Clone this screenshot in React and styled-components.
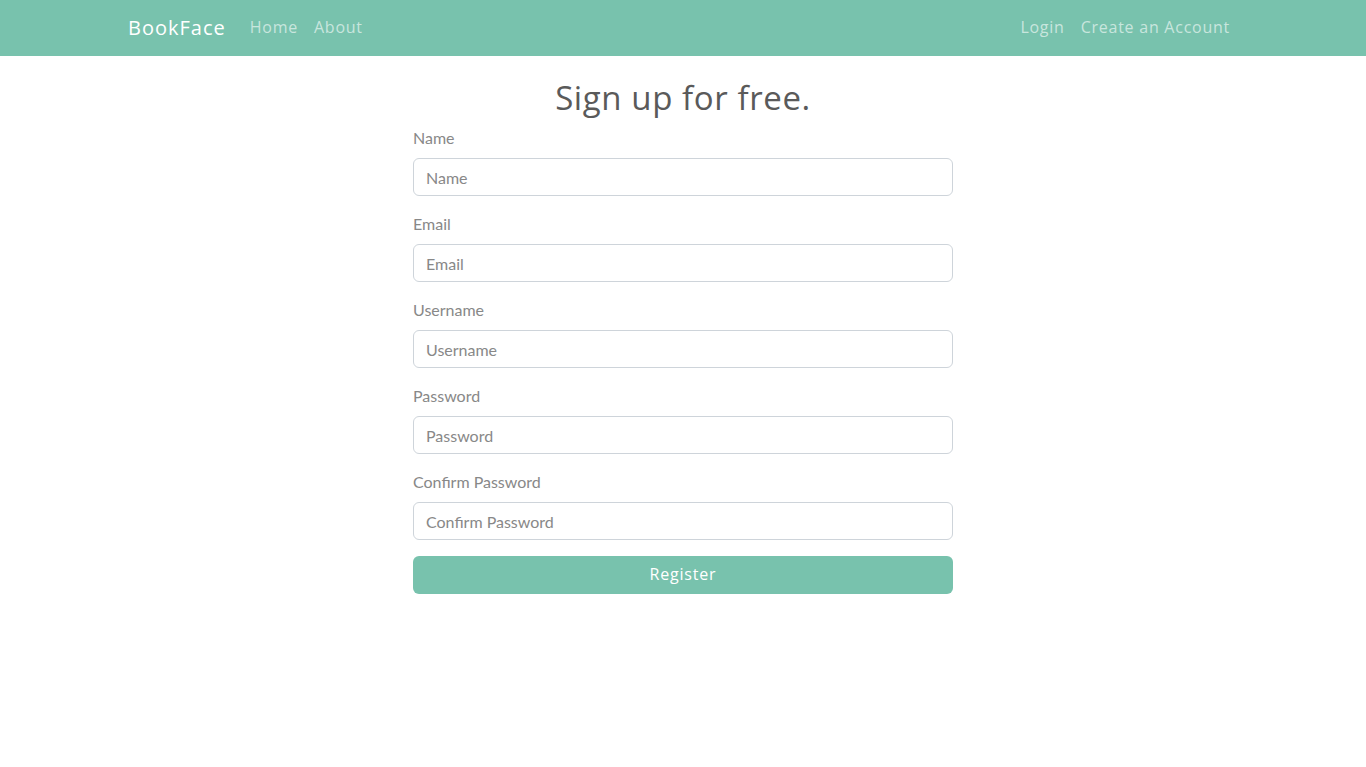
import React from 'react';
import styled, { createGlobalStyle } from 'styled-components';

const GlobalStyle = createGlobalStyle`
  * { box-sizing: border-box; }
  body {
    margin: 0;
    background: #fff;
    font-family: 'Lato', 'Open Sans', sans-serif;
    color: #888;
  }
`;

const Navbar = styled.nav`
  height: 56px;
  background: #78c2ad;
`;

const NavInner = styled.div`
  max-width: 1140px;
  height: 100%;
  margin: 0 auto;
  padding: 0 15px;
  display: flex;
  align-items: center;
  font-family: 'Open Sans', 'Noto Sans', sans-serif;
`;

const Brand = styled.a`
  font-size: 20px;
  letter-spacing: 1px;
  color: #fff;
  margin-right: 16px;
  padding-bottom: 2px;
  text-decoration: none;
`;

const NavGroup = styled.div`
  display: flex;
  margin-left: ${p => (p.$right ? 'auto' : '0')};
`;

const NavLink = styled.a`
  padding: 0 8px 2px;
  font-size: 16px;
  letter-spacing: 0.75px;
  color: rgba(255, 255, 255, 0.6);
  text-decoration: none;
`;

const Main = styled.main`
  width: 540px;
  margin: 0 auto;
  padding-top: 21px;
`;

const Heading = styled.h2`
  margin: 0 0 8px;
  font-family: 'Open Sans', 'Noto Sans', sans-serif;
  font-weight: 400;
  font-size: 33px;
  line-height: 41px;
  letter-spacing: 0.6px;
  text-align: center;
  color: #5a5a5a;
`;

const Group = styled.div`
  margin-bottom: 16px;
`;

const Label = styled.label`
  display: block;
  font-size: 16px;
  line-height: 24px;
  margin-bottom: 8px;
  color: #888;
`;

const Input = styled.input`
  display: block;
  width: 100%;
  height: 38px;
  padding: 6px 12px;
  font-family: 'Lato', 'Open Sans', sans-serif;
  font-size: 16px;
  color: #5a5a5a;
  border: 1px solid #ced4da;
  border-radius: 6px;
  outline: none;
  &::placeholder { color: #888; }
`;

const Button = styled.button`
  display: block;
  width: 100%;
  height: 38px;
  padding: 0 0 2px;
  border: none;
  border-radius: 6px;
  background: #78c2ad;
  color: #fff;
  font-family: 'Open Sans', 'Noto Sans', sans-serif;
  font-size: 16px;
  letter-spacing: 0.8px;
  cursor: pointer;
`;

const fields = ['Name', 'Email', 'Username', 'Password', 'Confirm Password'];

export default function App() {
  return (
    <>
      <GlobalStyle />
      <Navbar>
        <NavInner>
          <Brand href="#">BookFace</Brand>
          <NavGroup>
            <NavLink href="#">Home</NavLink>
            <NavLink href="#">About</NavLink>
          </NavGroup>
          <NavGroup $right>
            <NavLink href="#">Login</NavLink>
            <NavLink href="#">Create an Account</NavLink>
          </NavGroup>
        </NavInner>
      </Navbar>
      <Main>
        <Heading>Sign up for free.</Heading>
        <form onSubmit={e => e.preventDefault()}>
          {fields.map(f => (
            <Group key={f}>
              <Label>{f}</Label>
              <Input
                type={f.includes('Password') ? 'password' : 'text'}
                placeholder={f}
              />
            </Group>
          ))}
          <Button type="submit">Register</Button>
        </form>
      </Main>
    </>
  );
}
